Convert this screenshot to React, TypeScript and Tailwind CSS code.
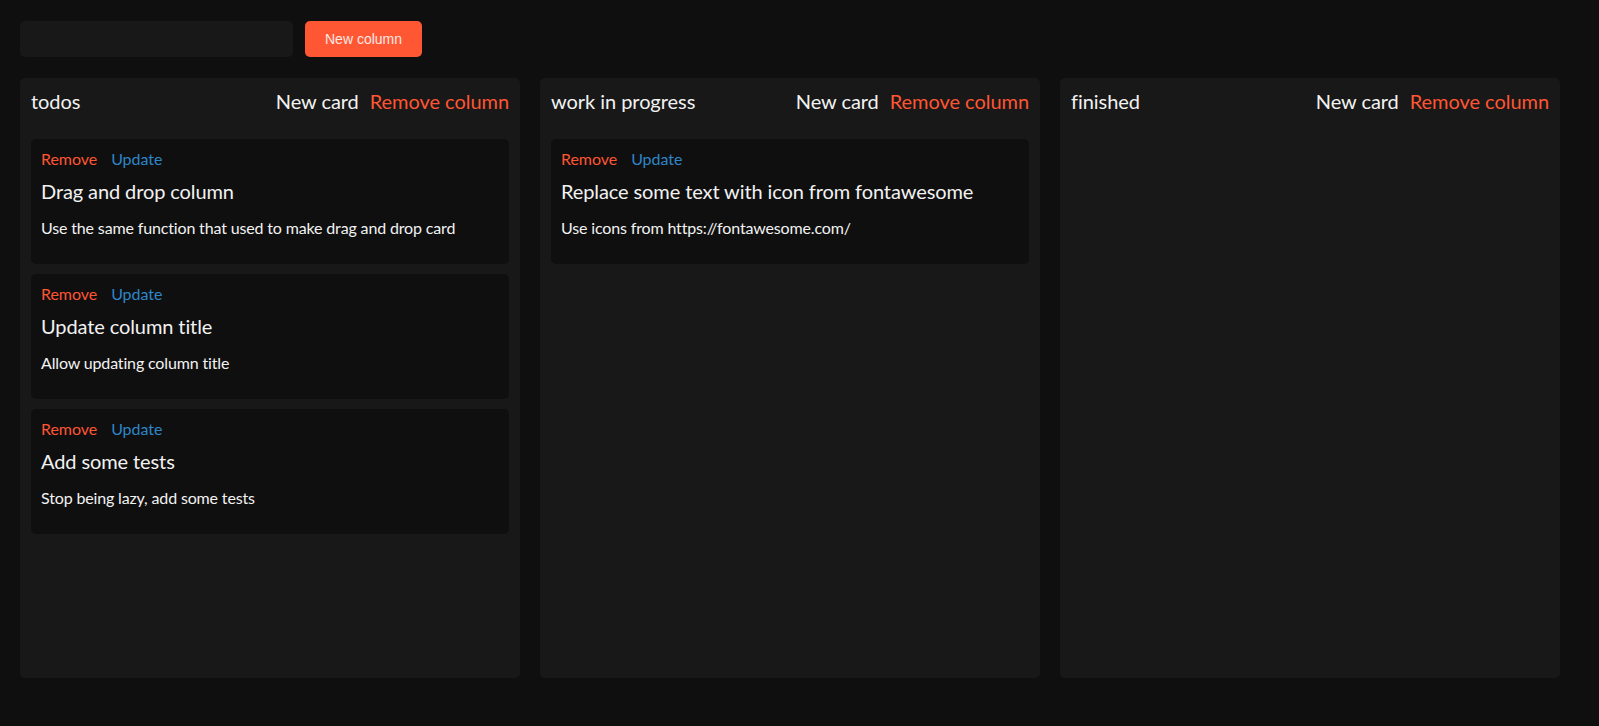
import React from "react";

interface Card {
  id: number;
  title: string;
  description: string;
}

interface Column {
  id: number;
  title: string;
  cards: Card[];
}

const columns: Column[] = [
  {
    id: 1,
    title: "todos",
    cards: [
      {
        id: 1,
        title: "Drag and drop column",
        description: "Use the same function that used to make drag and drop card",
      },
      {
        id: 2,
        title: "Update column title",
        description: "Allow updating column title",
      },
      {
        id: 3,
        title: "Add some tests",
        description: "Stop being lazy, add some tests",
      },
    ],
  },
  {
    id: 2,
    title: "work in progress",
    cards: [
      {
        id: 4,
        title: "Replace some text with icon from fontawesome",
        description: "Use icons from https://fontawesome.com/",
      },
    ],
  },
  { id: 3, title: "finished", cards: [] },
];

function CardItem({ card }: { card: Card }) {
  return (
    <div className="rounded-[5px] bg-[#0f0f0f] px-[10px] pt-[10px] pb-[10px]">
      <div className="flex text-[16px] leading-[19px] tracking-[-0.05px]">
        <span className="text-[#ff5533] cursor-pointer">Remove</span>
        <span className="ml-[14px] text-[#2e86c8] cursor-pointer">Update</span>
      </div>
      <h3 className="mt-[11px] text-[20px] leading-[24px] tracking-[-0.1px] text-[#f2f2f2]">
        {card.title}
      </h3>
      <p className="mt-[15px] mb-[17px] text-[16px] leading-[19px] text-[#f2f2f2]">
        {card.description}
      </p>
    </div>
  );
}

export default function App() {
  return (
    <div
      className="min-h-screen bg-[#0f0f0f] px-5 pt-[21px] text-white tracking-[-0.15px]"
      style={{ fontFamily: "Lato, 'Noto Sans', sans-serif" }}
    >
      {/* Top bar */}
      <div className="flex items-center gap-[12px]">
        <input
          className="h-[36px] w-[273px] rounded-[5px] bg-[#181818] px-3 text-white outline-none"
          type="text"
        />
        <button
          className="h-[36px] w-[117px] rounded-[5px] bg-[#ff5733] text-[14px] tracking-normal text-[#fde8e4]"
          style={{ fontFamily: "'Liberation Sans', Arial, sans-serif" }}
        >
          New column
        </button>
      </div>

      {/* Board */}
      <div className="mt-[21px] flex gap-5">
        {columns.map((column) => (
          <div
            key={column.id}
            className="h-[600px] w-[500px] shrink-0 rounded-[5px] bg-[#181818] px-[11px] pt-[11px]"
          >
            <div className="flex items-center text-[20px] leading-[24px] tracking-[-0.05px]">
              <span className="text-[#f2f2f2]">{column.title}</span>
              <span className="ml-auto text-[#f2f2f2] cursor-pointer">New card</span>
              <span className="ml-[11px] text-[#ff5533] cursor-pointer">
                Remove column
              </span>
            </div>
            <div className="mt-[26px] flex flex-col gap-[10px]">
              {column.cards.map((card) => (
                <CardItem key={card.id} card={card} />
              ))}
            </div>
          </div>
        ))}
      </div>
    </div>
  );
}
